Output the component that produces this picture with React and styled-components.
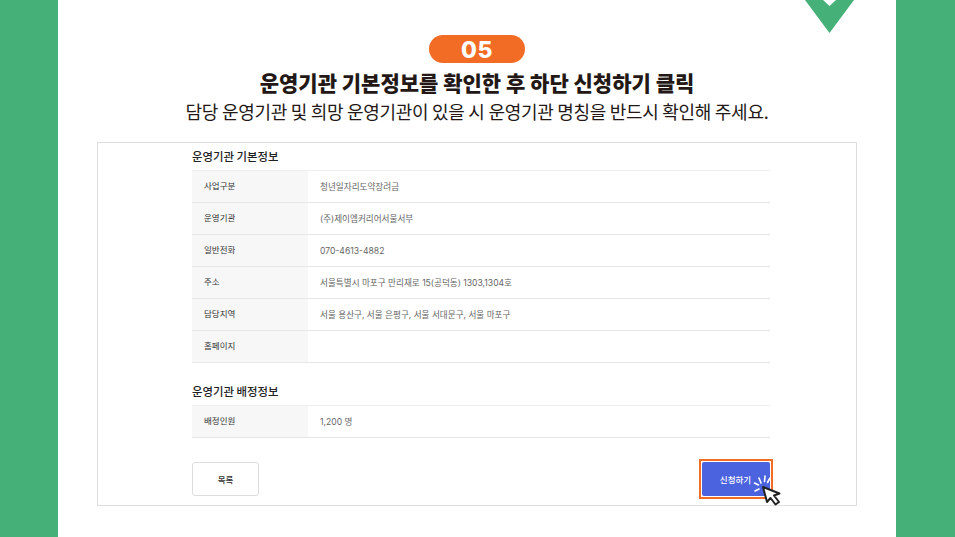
import styled, { createGlobalStyle } from 'styled-components'

const rows = [
  { label: '사업구분', value: '청년일자리도약장려금' },
  { label: '운영기관', value: '(주)제이엠커리어서울서부' },
  { label: '일반전화', value: '070-4613-4882' },
  { label: '주소', value: '서울특별시 마포구 만리재로 15(공덕동) 1303,1304호' },
  { label: '담당지역', value: '서울 용산구, 서울 은평구, 서울 서대문구, 서울 마포구' },
  { label: '홈페이지', value: '' },
]

function InfoTable({ items }) {
  return (
    <Table>
      {items.map((item) => (
        <Row key={item.label}>
          <LabelCell>{item.label}</LabelCell>
          <ValueCell>{item.value}</ValueCell>
        </Row>
      ))}
    </Table>
  )
}

function App() {
  return (
    <>
      <GlobalStyle />
      <Page>
        <Panel>
          <Chevron viewBox="0 0 49 33">
            <path d="M0 0H18L24.5 6L31 0H49L24.5 33Z" fill="#45B078" />
          </Chevron>
          <StepBadge>05</StepBadge>
          <Title>운영기관 기본정보를 확인한 후 하단 신청하기 클릭</Title>
          <Subtitle>담당 운영기관 및 희망 운영기관이 있을 시 운영기관 명칭을 반드시 확인해 주세요.</Subtitle>
          <Card>
            <Inner>
              <SectionTitle>운영기관 기본정보</SectionTitle>
              <InfoTable items={rows} />
              <SecondTitle>운영기관 배정정보</SecondTitle>
              <InfoTable items={[{ label: '배정인원', value: '1,200 명' }]} />
              <Actions>
                <ListButton>목록</ListButton>
                <ApplyWrap>
                  <ApplyButton>신청하기</ApplyButton>
                  <Cursor viewBox="0 0 34 32">
                    <g stroke="#fff" strokeWidth="1.6" strokeLinecap="round">
                      <path d="M7 3L9 8" />
                      <path d="M13 1L12.5 6.5" />
                      <path d="M2.5 8L6.5 10" />
                      <path d="M3 16L7 14" />
                      <path d="M18 3L15.5 7.5" />
                    </g>
                    <path
                      d="M11 12L15 27L18.5 23L23.5 29.5L27 27L22 20.5L27.5 18.5Z"
                      fill="#fff"
                      stroke="#222"
                      strokeWidth="2"
                      strokeLinejoin="round"
                    />
                  </Cursor>
                </ApplyWrap>
              </Actions>
            </Inner>
          </Card>
        </Panel>
      </Page>
    </>
  )
}

const GlobalStyle = createGlobalStyle`
  html, body {
    margin: 0;
    padding: 0;
    background: #45B078;
  }
  body {
    font-family: "Noto Sans CJK KR", "Noto Sans", sans-serif;
  }
`

const Page = styled.div`
  height: 537px;
  overflow: hidden;
  display: flex;
  padding-left: 58px;
  background: #45B078;
`

const Panel = styled.main`
  position: relative;
  width: 838px;
  box-sizing: border-box;
  padding-top: 35px;
  background: #fff;
  display: flex;
  flex-direction: column;
  align-items: center;
`

const Chevron = styled.svg`
  position: absolute;
  top: 0;
  left: 747px;
  width: 49px;
  height: 33px;
`

const StepBadge = styled.div`
  width: 96px;
  height: 28px;
  border-radius: 14px;
  background: #F26C25;
  color: #fff;
  font-family: "Inter", "Noto Sans CJK KR", sans-serif;
  font-size: 23px;
  font-weight: 800;
  line-height: 30px;
  text-align: center;
  letter-spacing: 0.5px;
`

const Title = styled.h1`
  margin: 4px 0 0;
  font-size: 21px;
  font-weight: 900;
  line-height: 30px;
  color: #231815;
  letter-spacing: 0;
  white-space: nowrap;
`

const Subtitle = styled.p`
  margin: 0;
  font-size: 18px;
  font-weight: 400;
  line-height: 28px;
  color: #231815;
  letter-spacing: -0.29px;
  white-space: nowrap;
`

const Card = styled.section`
  width: 760px;
  height: 364px;
  margin-top: 17px;
  box-sizing: border-box;
  border: 1px solid #dedede;
  padding-left: 94px;
`

const Inner = styled.div`
  width: 578px;
  display: flex;
  flex-direction: column;
`

const SectionTitle = styled.h2`
  margin: 0;
  height: 28px;
  font-size: 11.4px;
  font-weight: 500;
  line-height: 27px;
  color: #222;
`

const SecondTitle = styled(SectionTitle)`
  margin-top: 15px;
`

const Table = styled.div`
  box-shadow: 0 -1px 0 #eeeeee;
`

const Row = styled.div`
  display: flex;
  height: 32px;
  box-sizing: border-box;
  border-bottom: 1px solid #e6e6e6;
`

const LabelCell = styled.div`
  width: 116px;
  box-sizing: border-box;
  padding-left: 12px;
  background: #f7f7f7;
  font-size: 8.5px;
  line-height: 28px;
  color: #333;
`

const ValueCell = styled.div`
  flex: 1;
  padding-left: 12px;
  font-family: "Inter", "Noto Sans CJK KR", sans-serif;
  font-size: 8.6px;
  line-height: 32px;
  color: #666;
`

const Actions = styled.div`
  margin-top: 24px;
  display: flex;
  justify-content: space-between;
  align-items: flex-start;
`

const ListButton = styled.button`
  width: 67px;
  height: 34px;
  padding: 0;
  background: #fff;
  border: 1px solid #dddddd;
  border-radius: 3px;
  font-family: inherit;
  font-size: 8.5px;
  font-weight: 500;
  color: #333;
`

const ApplyWrap = styled.div`
  position: relative;
  width: 68px;
  height: 34px;
  outline: 2px solid #F26C25;
  outline-offset: 1px;
`

const ApplyButton = styled.button`
  display: block;
  width: 68px;
  height: 34px;
  padding: 0 1px 0 0;
  background: #4C63E0;
  border: none;
  border-radius: 2px;
  font-family: inherit;
  font-size: 8.5px;
  font-weight: 500;
  color: #fff;
`

const Cursor = styled.svg`
  position: absolute;
  left: 50px;
  top: 13px;
  width: 34px;
  height: 32px;
`

export default App
